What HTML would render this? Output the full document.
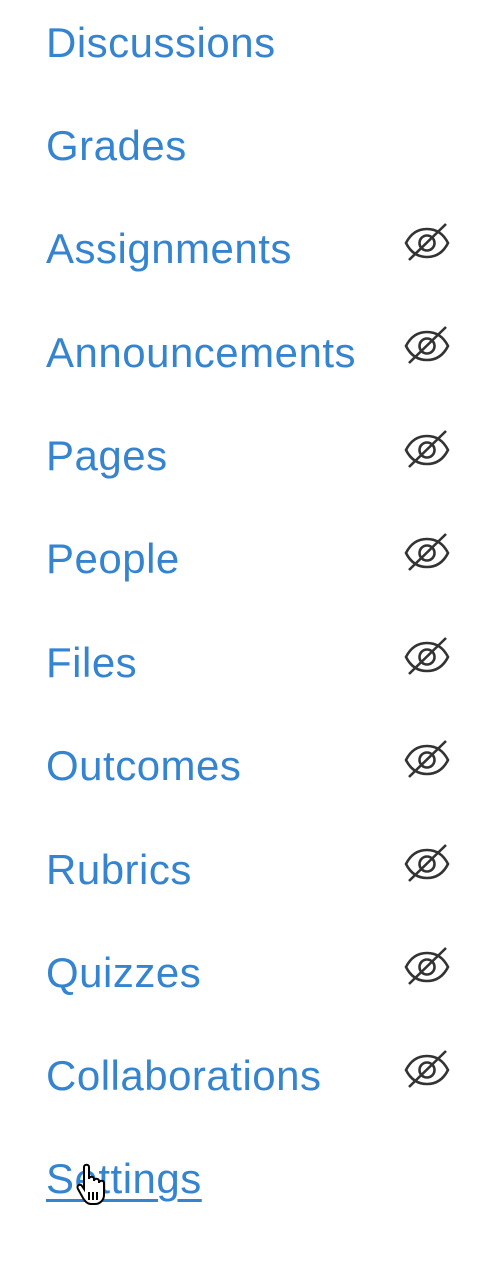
<!DOCTYPE html>
<html><head><style>
html,body{margin:0;padding:0;background:#fff;width:498px;height:1286px;overflow:hidden}
.row{position:absolute;left:46px;font-family:"Liberation Sans",sans-serif;font-size:42px;color:#3584d0;line-height:1;letter-spacing:0.5px}
.eye{position:absolute;left:403px;width:48px;height:40px}
</style></head><body>
<div class="row" style="top:22px">Discussions</div>
<div class="row" style="top:125px">Grades</div>
<div class="row" style="top:228px">Assignments</div>
<div class="row" style="top:332px">Announcements</div>
<div class="row" style="top:435px">Pages</div>
<div class="row" style="top:538px">People</div>
<div class="row" style="top:642px">Files</div>
<div class="row" style="top:745px">Outcomes</div>
<div class="row" style="top:849px">Rubrics</div>
<div class="row" style="top:952px">Quizzes</div>
<div class="row" style="top:1055px">Collaborations</div>
<div class="row" style="top:1158px;text-decoration:underline;text-decoration-thickness:3px;text-underline-offset:6px">Settings</div>
<svg style="position:absolute;left:76px;top:1163px" width="34" height="44" viewBox="0 0 34 44"><path d="M8 4c0-3 5-3 5 0v12c0-3 5-3 5 0v2c0-3 5-3 5 0v2c0-3 5-3 5 0v12c0 5-4 9-9 9h-4c-4 0-6-3-8-6L2 26c-2-3 2-6 4-3l2 3z" fill="#fff" stroke="#000" stroke-width="2"/><path d="M13 29v8M17 29v8M21 29v8" stroke="#000" stroke-width="2"/></svg>
<svg width="0" height="0" style="position:absolute"><defs><g id="e"><path d="M3 21c5-10 12-14 21-14s16 4 21 14c-5 10-12 14-21 14S8 31 3 21z" fill="none" stroke="#333" stroke-width="2.6"/><circle cx="24" cy="21" r="7.5" fill="none" stroke="#333" stroke-width="2.6"/><path d="M6 38L43 2" stroke="#333" stroke-width="2.6"/></g></defs></svg>
<svg class="eye" style="top:222px" viewBox="0 0 48 40"><use href="#e"/></svg>
<svg class="eye" style="top:325px" viewBox="0 0 48 40"><use href="#e"/></svg>
<svg class="eye" style="top:429px" viewBox="0 0 48 40"><use href="#e"/></svg>
<svg class="eye" style="top:532px" viewBox="0 0 48 40"><use href="#e"/></svg>
<svg class="eye" style="top:636px" viewBox="0 0 48 40"><use href="#e"/></svg>
<svg class="eye" style="top:739px" viewBox="0 0 48 40"><use href="#e"/></svg>
<svg class="eye" style="top:843px" viewBox="0 0 48 40"><use href="#e"/></svg>
<svg class="eye" style="top:946px" viewBox="0 0 48 40"><use href="#e"/></svg>
<svg class="eye" style="top:1049px" viewBox="0 0 48 40"><use href="#e"/></svg>
</body></html>
